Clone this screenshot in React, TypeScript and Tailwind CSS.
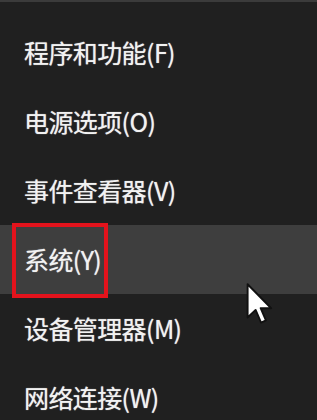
import React from 'react'

const items = [
  { label: '程序和功能', key: 'F' },
  { label: '电源选项', key: 'O' },
  { label: '事件查看器', key: 'V' },
  { label: '系统', key: 'Y', active: true },
  { label: '设备管理器', key: 'M' },
  { label: '网络连接', key: 'W' },
]

function Cursor() {
  return (
    <svg width="27" height="41" viewBox="0 0 12.5 19.5" className="absolute left-[246px] top-[281px]">
      <path
        d="M0.6 0.6 L0.6 16.4 L4.4 12.8 L7 18.8 L9.3 17.8 L6.8 12 L11.8 12 Z"
        fill="#ffffff"
        stroke="#111111"
        strokeWidth="0.9"
        strokeLinejoin="round"
      />
    </svg>
  )
}

export default function App() {
  return (
    <div
      className="relative w-[317px] h-[420px] overflow-hidden bg-[#202020] border-t-2 border-[#3b3b3b] text-[#f2f2f2]"
      style={{ fontFamily: '"Noto Sans CJK SC", "Noto Sans", sans-serif' }}
    >
      <div className="flex flex-col pt-4">
        {items.map((item) => (
          <div
            key={item.key}
            className={`relative h-[69px] flex items-center pl-[24px] ${item.active ? 'bg-[#3e3e3e]' : ''}`}
          >
            <span className="text-[25px] leading-none tracking-[-0.6px] whitespace-nowrap [text-shadow:0_0_1px_rgba(255,255,255,0.7)]">
              {item.label}({item.key})
            </span>
            {item.active && (
              <div className="absolute left-[12px] -top-[2px] w-[96px] h-[75px] border-4 border-[#e3131c]" />
            )}
          </div>
        ))}
      </div>
      <Cursor />
    </div>
  )
}
